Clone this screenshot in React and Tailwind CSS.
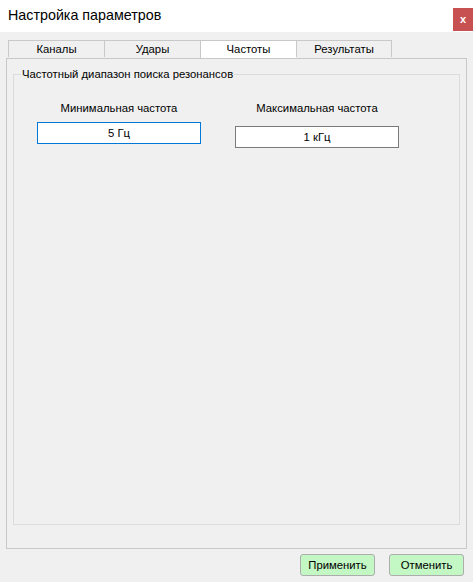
import React from "react";

const tabs = ["Каналы", "Удары", "Частоты", "Результаты"];

function App() {
  return (
    <div
      className="w-[473px] h-[582px] bg-[#f0f0f0] flex flex-col text-[11.3px] text-black"
      style={{ fontFamily: '"Liberation Sans", Arial, sans-serif' }}
    >
      <div className="h-[32px] bg-white flex items-center justify-between pl-[8px] shrink-0">
        <span className="text-[14.3px] -mt-[1px]">Настройка параметров</span>
        <button className="w-[20px] h-[23px] mt-[6px] bg-[#c75050] text-white text-[11px] font-bold flex items-center justify-center leading-none">
          x
        </button>
      </div>

      <div className="flex flex-col pl-[6px] pr-[6px] pt-[8px]">
        <div className="flex pl-[2px] h-[18px] relative z-10">
          {tabs.map((t, i) => (
            <div
              key={t}
              className={
                "w-[96px] flex items-center justify-center border-t border-l border-[#c8c8c8] " +
                (i === 3 ? "border-r " : "") +
                (i === 2 ? "bg-white h-[18px]" : "bg-[#f0f0f0] h-[17px]")
              }
            >
              {t}
            </div>
          ))}
        </div>

        <div className="h-[491px] border border-[#c8c8c8] px-[6px] pt-[15px] pb-[23px] flex flex-col">
          <div className="relative flex-1 border border-[#dcdcdc] flex flex-col">
            <span className="absolute -top-[8px] left-[7px] bg-[#f0f0f0] px-[1px] leading-[14px]">
              Частотный диапазон поиска резонансов
            </span>
            <div className="flex pt-[26px] pl-[23px]">
              <div className="w-[164px] flex flex-col items-center">
                <span className="leading-[14px] mb-[7px]">Минимальная частота</span>
                <div className="w-[164px] h-[22px] bg-white border border-[#0078d7] flex items-center justify-center">
                  5 Гц
                </div>
              </div>
              <div className="w-[164px] ml-[34px] flex flex-col items-center">
                <span className="leading-[14px] mb-[11px]">Максимальная частота</span>
                <div className="w-[164px] h-[22px] bg-white border border-[#7a7a7a] flex items-center justify-center">
                  1 кГц
                </div>
              </div>
            </div>
          </div>
        </div>
      </div>

      <div className="flex justify-end gap-[14px] pr-[9px] pt-[5px]">
        <button className="w-[75px] h-[22px] bg-[#c3f7c3] border border-[#adadad] rounded-[3px] flex items-center justify-center">
          Применить
        </button>
        <button className="w-[75px] h-[22px] bg-[#c3f7c3] border border-[#adadad] rounded-[3px] flex items-center justify-center">
          Отменить
        </button>
      </div>
    </div>
  );
}

export default App;
